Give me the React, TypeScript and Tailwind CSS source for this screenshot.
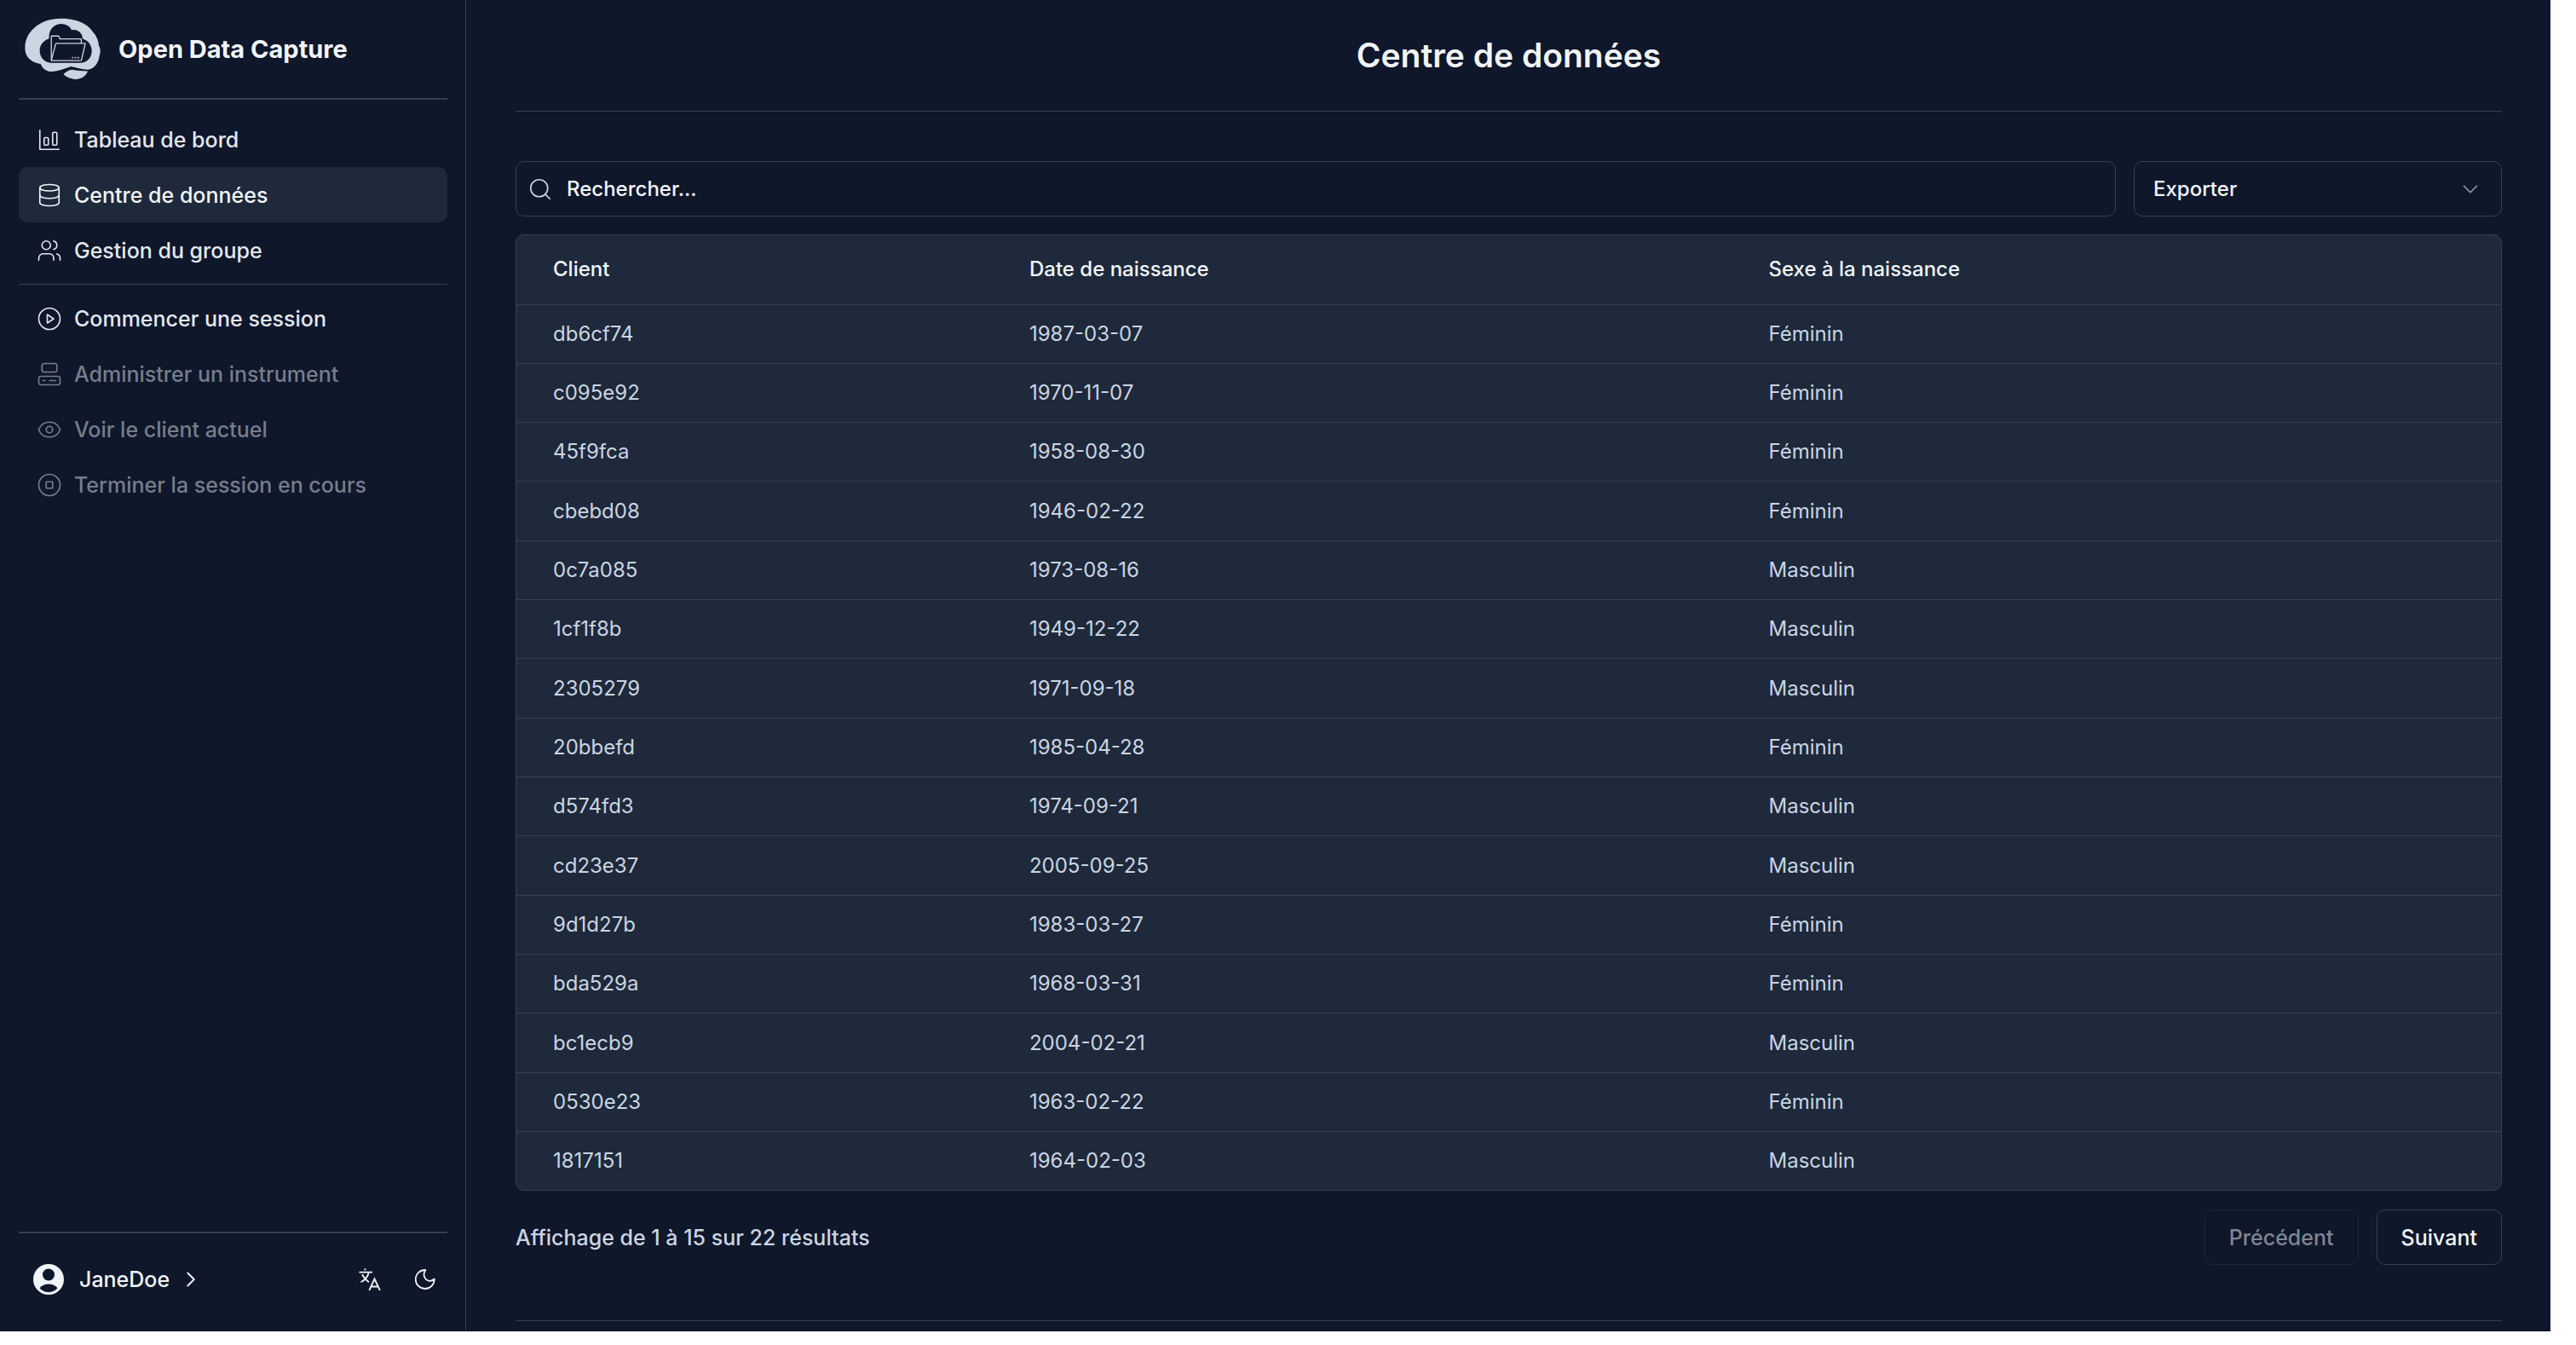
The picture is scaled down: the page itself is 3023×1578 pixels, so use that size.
import React from "react";
import { ChevronDown, ChevronRight, Computer, Database, Eye, Search, Users } from "lucide-react";

type IconProps = { className?: string; strokeWidth?: number };
type IconType = React.ComponentType<IconProps>;

function Icon24({ className, strokeWidth, children }: IconProps & { children: React.ReactNode }) {
  return (
    <svg viewBox="0 0 24 24" className={className} fill="none" stroke="currentColor" strokeWidth={strokeWidth} strokeLinecap="round" strokeLinejoin="round" aria-hidden="true">
      {children}
    </svg>
  );
}

function ChartIcon(props: IconProps) {
  return (
    <Icon24 {...props}>
      <path d="M3 3v18h18" />
      <rect x="7" y="10" width="4" height="7" rx="1" />
      <rect x="15" y="5" width="4" height="12" rx="1" />
    </Icon24>
  );
}

function PlayIcon(props: IconProps) {
  return (
    <Icon24 {...props}>
      <circle cx="12" cy="12" r="10" />
      <path d="M10 8l6 4-6 4z" />
    </Icon24>
  );
}

function StopIcon(props: IconProps) {
  return (
    <Icon24 {...props}>
      <circle cx="12" cy="12" r="10" />
      <path d="M9 9h6v6H9z" />
    </Icon24>
  );
}

function Logo() {
  return (
    <svg viewBox="24 34 272 220" className="h-[73px] w-[91px] shrink-0" aria-hidden="true">
      <g fill="#cbd5e1">
        <path
          fillRule="evenodd"
          d="M82 197C58 193 28 180 27 142C26 90 66 52 118 40C160 32 204 36 240 57C252 64 262 75 268 85C280 96 287 116 288 132C294 142 295 158 290 168C288 190 274 214 250 217C228 216 208 210 190 206C166 214 142 224 118 224C98 223 88 210 82 197Z
             M112 107C110 76 128 56 154 55C172 55 186 64 192 77C212 72 230 86 231 108C250 114 263 130 263 151C263 175 246 193 222 193H122C98 193 79 175 79 150C79 130 92 113 112 107Z"
        />
        <path d="M163 233C172 224 182 218 193 217C212 220 230 222 249 222C242 240 226 250 205 251C188 250 172 243 163 233Z" />
        <rect x="193" y="172" width="5" height="5" />
        <rect x="203" y="172" width="5" height="5" />
        <rect x="213" y="172" width="5" height="5" />
      </g>
      <g fill="none" stroke="#cbd5e1" strokeWidth="4" strokeLinejoin="round">
        <path d="M120 184V99Q120 98 122 98H144Q149 100 150 108H224Q226 108 226 110V124" />
        <path d="M120 185L135 127Q136 124 140 124H240L227 182Q226 185 223 185Z" />
      </g>
    </svg>
  );
}

function AvatarIcon() {
  return (
    <svg viewBox="0 0 36 36" className="size-9" aria-hidden="true">
      <circle cx="18" cy="18" r="18" fill="#f1f5f9" />
      <circle cx="18" cy="12.5" r="7" fill="#0f172a" />
      <path d="M7.5 28.3C9.8 25 13.6 23.4 18 23.4C22.4 23.4 26.2 25 28.5 28.3C26 31.3 22.3 33 18 33C13.7 33 10 31.3 7.5 28.3Z" fill="#0f172a" />
    </svg>
  );
}

function TranslateIcon() {
  return (
    <svg viewBox="0 0 26 26" className="size-[26px]" fill="none" stroke="currentColor" strokeWidth="1.8" aria-hidden="true">
      <path d="M0.500 4.700h15.500M7.500 0.200v2M4 7.200c1.800 3.800 4.500 6.800 8 9M11.600 5.500C10.500 10 7 14 2.500 16.300M12.300 26l6.200-13.500L24.900 26M14.500 21.500h8.200" />
    </svg>
  );
}

function MoonIcon() {
  return (
    <svg viewBox="0 0 24 24" className="size-6" fill="none" stroke="currentColor" strokeWidth="1.8" strokeLinejoin="round" aria-hidden="true">
      <path d="M12.3 1C10 4.500 10 8.500 12.500 11.500C15.500 15 19.500 14.500 22.700 11.500A11 11 0 1 1 12.300 1Z" />
    </svg>
  );
}

function NavItem({
  icon: Icon,
  label,
  active,
  disabled,
}: {
  icon: IconType;
  label: string;
  active?: boolean;
  disabled?: boolean;
}) {
  return (
    <button
      type="button"
      disabled={disabled}
      className={
        active
          ? "flex h-[65px] w-full items-center gap-[14px] rounded-[10px] bg-[#1e293b] px-[21px] text-left font-medium text-slate-100"
          : "flex h-[65px] w-full items-center gap-[14px] rounded-[10px] px-[21px] text-left font-medium text-slate-200 disabled:text-[#757e8c]"
      }
    >
      <Icon className="size-[30px] shrink-0" strokeWidth={1.3} />
      <span>{label}</span>
    </button>
  );
}

const rows: [string, string, string][] = [
  ["db6cf74", "1987-03-07", "Féminin"],
  ["c095e92", "1970-11-07", "Féminin"],
  ["45f9fca", "1958-08-30", "Féminin"],
  ["cbebd08", "1946-02-22", "Féminin"],
  ["0c7a085", "1973-08-16", "Masculin"],
  ["1cf1f8b", "1949-12-22", "Masculin"],
  ["2305279", "1971-09-18", "Masculin"],
  ["20bbefd", "1985-04-28", "Féminin"],
  ["d574fd3", "1974-09-21", "Masculin"],
  ["cd23e37", "2005-09-25", "Masculin"],
  ["9d1d27b", "1983-03-27", "Féminin"],
  ["bda529a", "1968-03-31", "Féminin"],
  ["bc1ecb9", "2004-02-21", "Masculin"],
  ["0530e23", "1963-02-22", "Féminin"],
  ["1817151", "1964-02-03", "Masculin"],
];

export default function App() {
  return (
    <div className="h-screen bg-white pr-[30px] pb-4 font-['Inter',sans-serif] text-[25px] leading-9">
      <div className="flex h-full bg-[#0f172a] text-slate-100">
        <aside className="flex w-[547px] shrink-0 flex-col border-r border-[#334155] pr-[21px] pl-[22px]">
          <div className="flex h-[115px] items-center gap-5 pl-[6px]">
            <Logo />
            <span className="text-[29px] font-bold">Open Data Capture</span>
          </div>
          <hr className="border-t-2 border-[#334155]" />
          <nav className="flex flex-col pt-[14px]">
            <NavItem icon={ChartIcon} label="Tableau de bord" />
            <NavItem icon={Database} label="Centre de données" active />
            <NavItem icon={Users} label="Gestion du groupe" />
            <hr className="my-[7px] border-[#334155]" />
            <NavItem icon={PlayIcon} label="Commencer une session" />
            <NavItem icon={Computer} label="Administrer un instrument" disabled />
            <NavItem icon={Eye} label="Voir le client actuel" disabled />
            <NavItem icon={StopIcon} label="Terminer la session en cours" disabled />
          </nav>
          <div className="mt-auto flex h-[117px] items-center border-t-2 border-[#334155] pr-[14px] pb-2 pl-[17px]">
            <button type="button" className="flex items-center gap-[18px] font-medium">
              <AvatarIcon />
              <span>JaneDoe</span>
              <ChevronRight className="-ml-2 size-[30px]" strokeWidth={1.5} />
            </button>
            <button type="button" aria-label="Langue" className="ml-auto">
              <TranslateIcon />
            </button>
            <button type="button" aria-label="Thème" className="ml-10">
              <MoonIcon />
            </button>
          </div>
        </aside>

        <main className="flex min-w-0 flex-1 flex-col pr-[57px] pb-3 pl-[58px]">
          <header className="flex h-[131px] shrink-0 items-center justify-center border-b border-[#334155]">
            <h1 className="text-[39px] leading-[50px] font-semibold">Centre de données</h1>
          </header>
          <div className="mt-[58px] flex h-[65px] shrink-0 gap-[21px] text-[24px]">
            <label className="flex flex-1 items-center gap-4 rounded-[10px] border border-[#334155] px-[13px]">
              <Search className="size-[30px] text-slate-300" strokeWidth={1.3} />
              <input
                type="search"
                aria-label="Rechercher"
                placeholder="Rechercher..."
                className="flex-1 bg-transparent font-medium outline-none placeholder:text-slate-100"
              />
            </label>
            <div className="grid w-[432px] grid-cols-1 items-center">
              <select
                aria-label="Exporter"
                className="col-start-1 row-start-1 h-full w-full appearance-none rounded-[10px] border border-[#334155] bg-transparent px-[22px] font-medium"
              >
                <option>Exporter</option>
              </select>
              <ChevronDown className="pointer-events-none col-start-1 row-start-1 mr-[22px] size-[30px] justify-self-end text-slate-400" strokeWidth={1.3} />
            </div>
          </div>
          <div className="mt-[21px] min-h-0 flex-1 overflow-hidden rounded-[10px] border border-[#334155] bg-[#1e293b] text-[24px]">
            <table className="h-full w-full table-fixed border-collapse text-left">
              <colgroup>
                <col className="w-[24%]" />
                <col className="w-[37.25%]" />
                <col />
              </colgroup>
              <thead>
                <tr className="h-[81px] border-b border-[#334155]">
                  <th className="px-[43px] font-medium">Client</th>
                  <th className="px-[43px] font-medium">Date de naissance</th>
                  <th className="px-[43px] font-medium">Sexe à la naissance</th>
                </tr>
              </thead>
              <tbody className="text-slate-300">
                {rows.map(([id, date, sex]) => (
                  <tr key={id} className="border-b border-[#334155] last:border-b-0">
                    <td className="px-[43px]">{id}</td>
                    <td className="px-[43px]">{date}</td>
                    <td className="px-[43px]">{sex}</td>
                  </tr>
                ))}
              </tbody>
            </table>
          </div>
          <div className="mt-[22px] flex h-[65px] shrink-0 items-center">
            <p className="font-medium text-slate-300">Affichage de 1 à 15 sur 22 résultats</p>
            <button type="button" disabled className="ml-auto h-full rounded-[10px] border border-[#1e293b] px-7 font-medium text-[#7f8694]">
              Précédent
            </button>
            <button type="button" className="ml-[21px] h-full rounded-[10px] border border-[#334155] px-7 font-medium">
              Suivant
            </button>
          </div>
          <hr className="mt-[65px] border-[#334155]" />
        </main>
      </div>
    </div>
  );
}
